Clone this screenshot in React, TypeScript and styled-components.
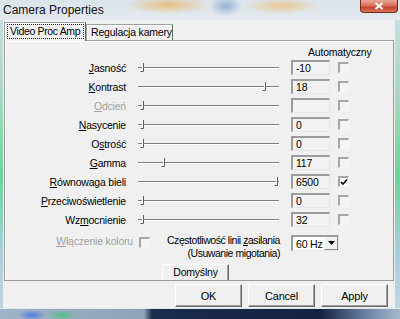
import React from 'react';
import styled, { createGlobalStyle } from 'styled-components';

const GlobalStyle = createGlobalStyle`
	html, body {
		margin: 0;
		padding: 0;
		background: #ffffff;
	}
	body {
		font-family: "Liberation Sans", Arial, sans-serif;
	}
	u {
		text-decoration: underline;
		text-underline-offset: 1px;
	}
`;

type Setting = {
	label: React.ReactNode;
	value: string;
	pos: number;
	disabled?: boolean;
	checked?: boolean;
};

const settings: Setting[] = [
	{ label: <><u>J</u>asność</>, value: '-10', pos: 0 },
	{ label: <><u>K</u>ontrast</>, value: '18', pos: 0.91 },
	{ label: <><u>O</u>dcień</>, value: '', pos: 0, disabled: true },
	{ label: <><u>N</u>asycenie</>, value: '0', pos: 0 },
	{ label: <>O<u>s</u>trość</>, value: '0', pos: 0 },
	{ label: <><u>G</u>amma</>, value: '117', pos: 0.16 },
	{ label: <><u>R</u>ównowaga bieli</>, value: '6500', pos: 1, checked: true },
	{ label: <><u>P</u>rzeciwoświetlenie</>, value: '0', pos: 0 },
	{ label: <>Wz<u>m</u>ocnienie</>, value: '32', pos: 0 },
];

function Slider({ pos }: { pos: number }) {
	return (
		<Track>
			<Thumb $pos={pos} width="5" height="9" viewBox="0 0 5 9">
				<path d="M3.5 0 V8.5 H0.5" fill="none" stroke="#5e5e5e" strokeWidth="1" />
				<path d="M2.5 0.5 V7.5" fill="none" stroke="#ffffff" strokeWidth="1" />
			</Thumb>
		</Track>
	);
}

function CheckBox({ checked }: { checked?: boolean }) {
	return (
		<Check $checked={checked}>
			{checked && (
				<svg width="9" height="8" viewBox="0 0 9 8">
					<path d="M1 4 L3.3 6.3 L8 1.2" fill="none" stroke="#000" strokeWidth="1.8" />
				</svg>
			)}
		</Check>
	);
}

export default function App() {
	return (
		<Window>
			<GlobalStyle />
			<TitleBar>
				<Title>Camera Properties</Title>
				<CloseButton>
					<svg width="10" height="8" viewBox="0 0 10 8">
						<path d="M1.5 1 L8.5 7 M8.5 1 L1.5 7" stroke="#ffffff" strokeWidth="2" />
					</svg>
				</CloseButton>
			</TitleBar>
			<Client>
				<TabStrip>
					<Tab $active>
						<FocusRect>Video Proc Amp</FocusRect>
					</Tab>
					<Tab>Regulacja kamery</Tab>
				</TabStrip>
				<Panel>
					<Header>Automatyczny</Header>
					{settings.map((s, i) => (
						<Row key={i}>
							<Label $disabled={s.disabled}>{s.label}</Label>
							<Slider pos={s.pos} />
							<ValueBox>{s.value}</ValueBox>
							<CheckBox checked={s.checked} />
						</Row>
					))}
					<BottomRow>
						<ColorLabel $disabled>
							<u>W</u>łączenie koloru
						</ColorLabel>
						<ColorCheck>
							<CheckBox />
						</ColorCheck>
						<FreqLabel>
							Częstotliwość linii <u>z</u>asilania
							<br />
							(Usuwanie migotania)
						</FreqLabel>
						<Dropdown>
							<span>60 Hz</span>
							<DropArrow>
								<svg width="7" height="4" viewBox="0 0 7 4">
									<path d="M0 0 H7 L3.5 4 Z" fill="#000" />
								</svg>
							</DropArrow>
						</Dropdown>
					</BottomRow>
					<DefaultButton>Domyślny</DefaultButton>
				</Panel>
				<ButtonRow>
					<Button>OK</Button>
					<Button>Cancel</Button>
					<Button>Apply</Button>
				</ButtonRow>
			</Client>
			<TaskStrip />
		</Window>
	);
}

const Window = styled.div`
	width: 400px;
	height: 319px;
	overflow: hidden;
	display: flex;
	flex-direction: column;
	background: linear-gradient(180deg, #cfdfe6 0%, #a6d9c2 30%, #6fd39a 55%, #a9cfdc 80%, #c6d6e2 100%);
`;

const TitleBar = styled.div`
	height: 20px;
	display: flex;
	align-items: flex-start;
	justify-content: space-between;
	background:
		radial-gradient(ellipse 42px 9px at 168px 5px, rgba(238, 160, 48, 0.55), transparent),
		radial-gradient(ellipse 16px 10px at 226px 6px, rgba(60, 110, 190, 0.45), transparent),
		radial-gradient(ellipse 38px 8px at 282px 6px, rgba(240, 172, 60, 0.5), transparent),
		linear-gradient(180deg, #dbe4ea, #e4eaee);
`;

const Title = styled.div`
	font-size: 12px;
	line-height: 20px;
	padding-left: 3px;
	color: #111;
`;

const CloseButton = styled.div`
	width: 38px;
	height: 13px;
	margin-right: 2px;
	box-sizing: border-box;
	border: 1px solid #6e2b1e;
	border-top: none;
	border-radius: 0 0 4px 4px;
	background: linear-gradient(180deg, #e9a896 0%, #d76b55 50%, #c3432b 60%, #d8765c 100%);
	display: flex;
	align-items: center;
	justify-content: center;
`;

const Client = styled.div`
	flex: 1;
	margin: 0 5px 0 3px;
	padding: 0 1px;
	background: #f0f0f0;
	display: flex;
	flex-direction: column;
	font-size: 10.5px;
	letter-spacing: -0.2px;
	color: #000;
`;

const TabStrip = styled.div`
	height: 20px;
	display: flex;
	align-items: flex-end;
`;

const Tab = styled.div<{ $active?: boolean }>`
	position: relative;
	z-index: 1;
	box-sizing: border-box;
	height: ${(p) => (p.$active ? 19 : 16)}px;
	margin-bottom: ${(p) => (p.$active ? -1 : 0)}px;
	padding: ${(p) => (p.$active ? '2px 2px 0 3px' : '1px 4px 0 4px')};
	background: #f0f0f0;
	border-style: solid;
	border-width: 1px 1px 0 1px;
	border-color: #a0a0a0 #6a6a6a #a0a0a0 #a0a0a0;
	box-shadow: inset 1px 1px 0 #ffffff;
	width: ${(p) => (p.$active ? 82 : 87)}px;
	line-height: 13px;
	white-space: nowrap;
`;

const FocusRect = styled.div`
	outline: 1px dotted #222;
	outline-offset: 0;
	padding: 0 1px 0 2px;
	letter-spacing: -0.35px;
	line-height: 13px;
`;

const Panel = styled.div`
	height: 241px;
	box-sizing: border-box;
	border: 1px solid #9a9a9a;
	box-shadow: inset 1px 1px 0 #ffffff;
	overflow: hidden;
	padding-top: 5px;
	display: flex;
	flex-direction: column;
`;

const Header = styled.div`
	height: 12px;
	line-height: 12px;
	padding-left: 303px;
`;

const Row = styled.div`
	height: 19px;
	display: flex;
	align-items: center;
`;

const Label = styled.div<{ $disabled?: boolean }>`
	width: 121px;
	text-align: right;
	white-space: nowrap;
	color: ${(p) => (p.$disabled ? '#a3a3a3' : '#000')};
`;

const Track = styled.div`
	position: relative;
	width: 141px;
	height: 19px;
	margin-left: 12px;
	&::before {
		content: '';
		position: absolute;
		left: 0;
		right: 0;
		top: 9px;
		border-top: 1px solid #7e7e7e;
		border-bottom: 1px solid #ffffff;
	}
`;

const Thumb = styled.svg<{ $pos: number }>`
	position: absolute;
	top: 5px;
	left: ${(p) => 2 + p.$pos * 134}px;
`;

const ValueBox = styled.div`
	width: 39px;
	height: 15px;
	margin-left: 12px;
	box-sizing: border-box;
	border-style: solid;
	border-width: 2px 1px 1px 2px;
	border-color: #9c9c9c #e6e6e6 #e6e6e6 #9c9c9c;
	background: #f2f2f2;
	padding-left: 3px;
	line-height: 12px;
`;

const Check = styled.div<{ $checked?: boolean }>`
	width: 11px;
	height: 11px;
	margin-left: 8px;
	box-sizing: border-box;
	border-style: solid;
	border-width: 2px 1px 1px 2px;
	border-color: #a6a6a6 #f6f6f6 #f6f6f6 #a6a6a6;
	background: ${(p) => (p.$checked ? '#ffffff' : '#f3f3f3')};
	display: flex;
	align-items: center;
	justify-content: center;
`;

const BottomRow = styled.div`
	height: 28px;
	margin-top: 4px;
	display: flex;
	align-items: flex-start;
`;

const ColorLabel = styled(Label)`
	width: 128px;
	line-height: 13px;
	margin-top: 2px;
`;

const ColorCheck = styled.div`
	margin-top: 4px;
	margin-left: -2px;
`;

const FreqLabel = styled.div`
	width: 116px;
	margin-left: 14px;
	text-align: right;
	line-height: 13px;
	margin-top: 1px;
	white-space: nowrap;
	letter-spacing: -0.45px;
`;

const Dropdown = styled.div`
	width: 48px;
	height: 16px;
	margin-left: 11px;
	margin-top: 2px;
	box-sizing: border-box;
	border-style: solid;
	border-width: 2px 1px 1px 2px;
	border-color: #9c9c9c #e6e6e6 #e6e6e6 #9c9c9c;
	background: #ffffff;
	display: flex;
	align-items: center;
	justify-content: space-between;
	padding-left: 3px;
	line-height: 12px;
`;

const DropArrow = styled.div`
	width: 14px;
	height: 13px;
	box-sizing: border-box;
	background: #f0f0f0;
	border-left: 1px solid #ffffff;
	border-right: 1px solid #8a8a8a;
	border-bottom: 1px solid #8a8a8a;
	display: flex;
	align-items: center;
	justify-content: center;
`;

const DefaultButton = styled.div`
	width: 67px;
	height: 18px;
	margin-top: 4px;
	margin-left: 157px;
	box-sizing: border-box;
	border-style: solid;
	border-width: 1px;
	border-color: #ffffff #6a6a6a #6a6a6a #ffffff;
	box-shadow: inset -1px 0 0 #a0a0a0;
	text-align: center;
	line-height: 15px;
	flex-shrink: 0;
`;

const ButtonRow = styled.div`
	display: flex;
	justify-content: flex-end;
	gap: 6px;
	padding-right: 6px;
	margin-top: 3px;
`;

const Button = styled.div`
	width: 67px;
	height: 23px;
	box-sizing: border-box;
	border-style: solid;
	border-width: 1px;
	border-color: #ffffff #6a6a6a #6a6a6a #ffffff;
	box-shadow: inset -1px -1px 0 #a0a0a0;
	display: flex;
	align-items: center;
	justify-content: center;
	font-size: 11px;
`;

const TaskStrip = styled.div`
	height: 10px;
	border-top: 1px solid #dfe8ee;
	background:
		radial-gradient(ellipse 14px 5px at 32px 6px, rgba(60, 110, 230, 0.8), transparent),
		radial-gradient(ellipse 14px 5px at 62px 6px, rgba(60, 200, 110, 0.8), transparent),
		linear-gradient(90deg, #9fb2c6 0%, #8ea3b8 36%, #1c2c4c 38%, #14223e 80%, #6f86a8 92%, #a8b8cc 100%);
`;
